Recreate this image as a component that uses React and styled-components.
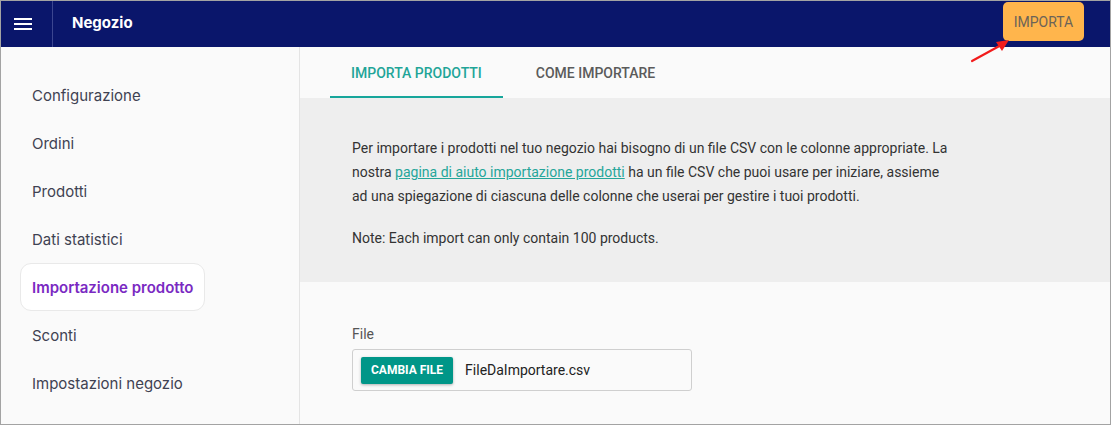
import React, { useState } from 'react';
import styled, { createGlobalStyle } from 'styled-components';

const GlobalStyle = createGlobalStyle`
  html, body {
    margin: 0;
    padding: 0;
    background: #fafafa;
  }
  * {
    box-sizing: border-box;
  }
`;

const menuItems = [
  'Configurazione',
  'Ordini',
  'Prodotti',
  'Dati statistici',
  'Importazione prodotto',
  'Sconti',
  'Impostazioni negozio',
];

const App = () => {
  const [active, setActive] = useState('Importazione prodotto');
  const [tab, setTab] = useState(0);

  return (
    <>
      <GlobalStyle />
      <Frame>
        <Header>
          <MenuButton aria-label="menu">
            <svg width="18" height="14" viewBox="0 0 18 14">
              <rect x="0" y="0" width="18" height="2" fill="#fff" />
              <rect x="0" y="5" width="18" height="2" fill="#fff" />
              <rect x="0" y="10" width="18" height="2" fill="#fff" />
            </svg>
          </MenuButton>
          <Title>Negozio</Title>
          <ImportButton>IMPORTA</ImportButton>
        </Header>

        <Body>
          <Sidebar>
            {menuItems.map((item) => (
              <NavItem
                key={item}
                $active={item === active}
                onClick={() => setActive(item)}
              >
                {item}
              </NavItem>
            ))}
          </Sidebar>

          <Main>
            <Tabs>
              <Tab $active={tab === 0} $pad={21} onClick={() => setTab(0)}>
                Importa prodotti
              </Tab>
              <Tab $active={tab === 1} $pad={33} onClick={() => setTab(1)}>
                Come importare
              </Tab>
            </Tabs>

            <InfoPanel>
              <Paragraph>
                Per importare i prodotti nel tuo negozio hai bisogno di un file CSV con le colonne appropriate. La
                nostra <HelpLink href="#">pagina di aiuto importazione prodotti</HelpLink> ha un file CSV che puoi usare per iniziare, assieme
                ad una spiegazione di ciascuna delle colonne che userai per gestire i tuoi prodotti.
              </Paragraph>
              <Paragraph>Note: Each import can only contain 100 products.</Paragraph>
            </InfoPanel>

            <FileSection>
              <FieldLabel>File</FieldLabel>
              <FileBox>
                <ChangeButton>CAMBIA FILE</ChangeButton>
                <FileName>FileDaImportare.csv</FileName>
              </FileBox>
            </FileSection>
          </Main>
        </Body>

        <Arrow width="50" height="34" viewBox="0 0 50 34">
          <line x1="3" y1="29" x2="34" y2="12" stroke="#f21b1b" strokeWidth="2.2" strokeLinecap="round" />
          <polygon points="40,8 27,10 33,19" fill="#f21b1b" />
        </Arrow>
      </Frame>
    </>
  );
};

const Frame = styled.div`
  position: relative;
  width: 1111px;
  height: 425px;
  border: 1px solid #a3a3a3;
  display: flex;
  flex-direction: column;
  overflow: hidden;
  background: #fafafa;
`;

const Header = styled.header`
  height: 46px;
  flex-shrink: 0;
  background: #0a166b;
  display: flex;
  align-items: center;
`;

const MenuButton = styled.div`
  width: 52px;
  height: 100%;
  display: flex;
  align-items: center;
  padding-left: 13px;
  padding-top: 1px;
  border-right: 1px solid #3c4690;
  cursor: pointer;
`;

const Title = styled.div`
  flex: 1;
  padding-left: 19px;
  padding-bottom: 3px;
  color: #fff;
  font-family: 'Inter', 'Noto Sans', sans-serif;
  font-weight: 700;
  font-size: 15px;
`;

const ImportButton = styled.button`
  align-self: flex-start;
  margin-top: 1px;
  margin-right: 26px;
  width: 81px;
  height: 39px;
  border: none;
  border-radius: 5px;
  background: #ffb54c;
  color: #6b6358;
  font-family: 'Roboto', sans-serif;
  font-size: 14px;
  cursor: pointer;
`;

const Body = styled.div`
  flex: 1;
  display: flex;
  min-height: 0;
`;

const Sidebar = styled.nav`
  width: 299px;
  flex-shrink: 0;
  border-right: 1px solid #e4e4e4;
  background: #fafafa;
  padding: 24px 19px 0;
  display: flex;
  flex-direction: column;
  align-items: flex-start;
`;

const NavItem = styled.div`
  height: 48px;
  display: flex;
  align-items: center;
  padding: 0 11px;
  border-radius: 11px;
  border: 1px solid ${(p) => (p.$active ? '#e9e9e9' : 'transparent')};
  background: ${(p) => (p.$active ? '#ffffff' : 'transparent')};
  color: ${(p) => (p.$active ? '#7a29c2' : '#3f4252')};
  font-family: 'Inter', 'Noto Sans', sans-serif;
  font-size: 15px;
  font-weight: ${(p) => (p.$active ? 600 : 400)};
  cursor: pointer;
`;

const Main = styled.main`
  flex: 1;
  display: flex;
  flex-direction: column;
  font-family: 'Roboto', sans-serif;
`;

const Tabs = styled.div`
  height: 51px;
  flex-shrink: 0;
  display: flex;
  padding-left: 30px;
`;

const Tab = styled.div`
  display: flex;
  align-items: center;
  padding: 3px ${(p) => p.$pad}px 0;
  text-transform: uppercase;
  font-size: 14px;
  font-weight: 500;
  color: ${(p) => (p.$active ? '#1fa598' : '#5b5b5b')};
  border-bottom: 2px solid ${(p) => (p.$active ? '#17a69b' : 'transparent')};
  cursor: pointer;
`;

const InfoPanel = styled.section`
  background: #eeeeee;
  height: 184px;
  padding: 38px 52px 0;
`;

const Paragraph = styled.p`
  margin: 0 0 18px;
  max-width: 606px;
  font-size: 14px;
  line-height: 24px;
  color: #333333;
`;

const HelpLink = styled.a`
  color: #26a69a;
  text-decoration: underline;
`;

const FileSection = styled.section`
  padding: 42px 52px 0;
`;

const FieldLabel = styled.div`
  font-size: 14px;
  line-height: 20px;
  color: #555555;
  margin-bottom: 5px;
`;

const FileBox = styled.div`
  width: 340px;
  height: 42px;
  border: 1px solid #cfcfcf;
  border-radius: 3px;
  background: #fafafa;
  display: flex;
  align-items: center;
  padding: 0 8px;
  gap: 12px;
`;

const ChangeButton = styled.button`
  height: 27px;
  padding: 0 10px;
  border: none;
  border-radius: 2px;
  background: #009688;
  color: #fff;
  font-family: 'Roboto', sans-serif;
  font-weight: 700;
  font-size: 12px;
  box-shadow: 0 1px 3px rgba(0, 0, 0, 0.3);
  cursor: pointer;
`;

const FileName = styled.span`
  font-size: 14px;
  color: #222;
`;

const Arrow = styled.svg`
  position: absolute;
  left: 968px;
  top: 31px;
  pointer-events: none;
`;

export default App;
